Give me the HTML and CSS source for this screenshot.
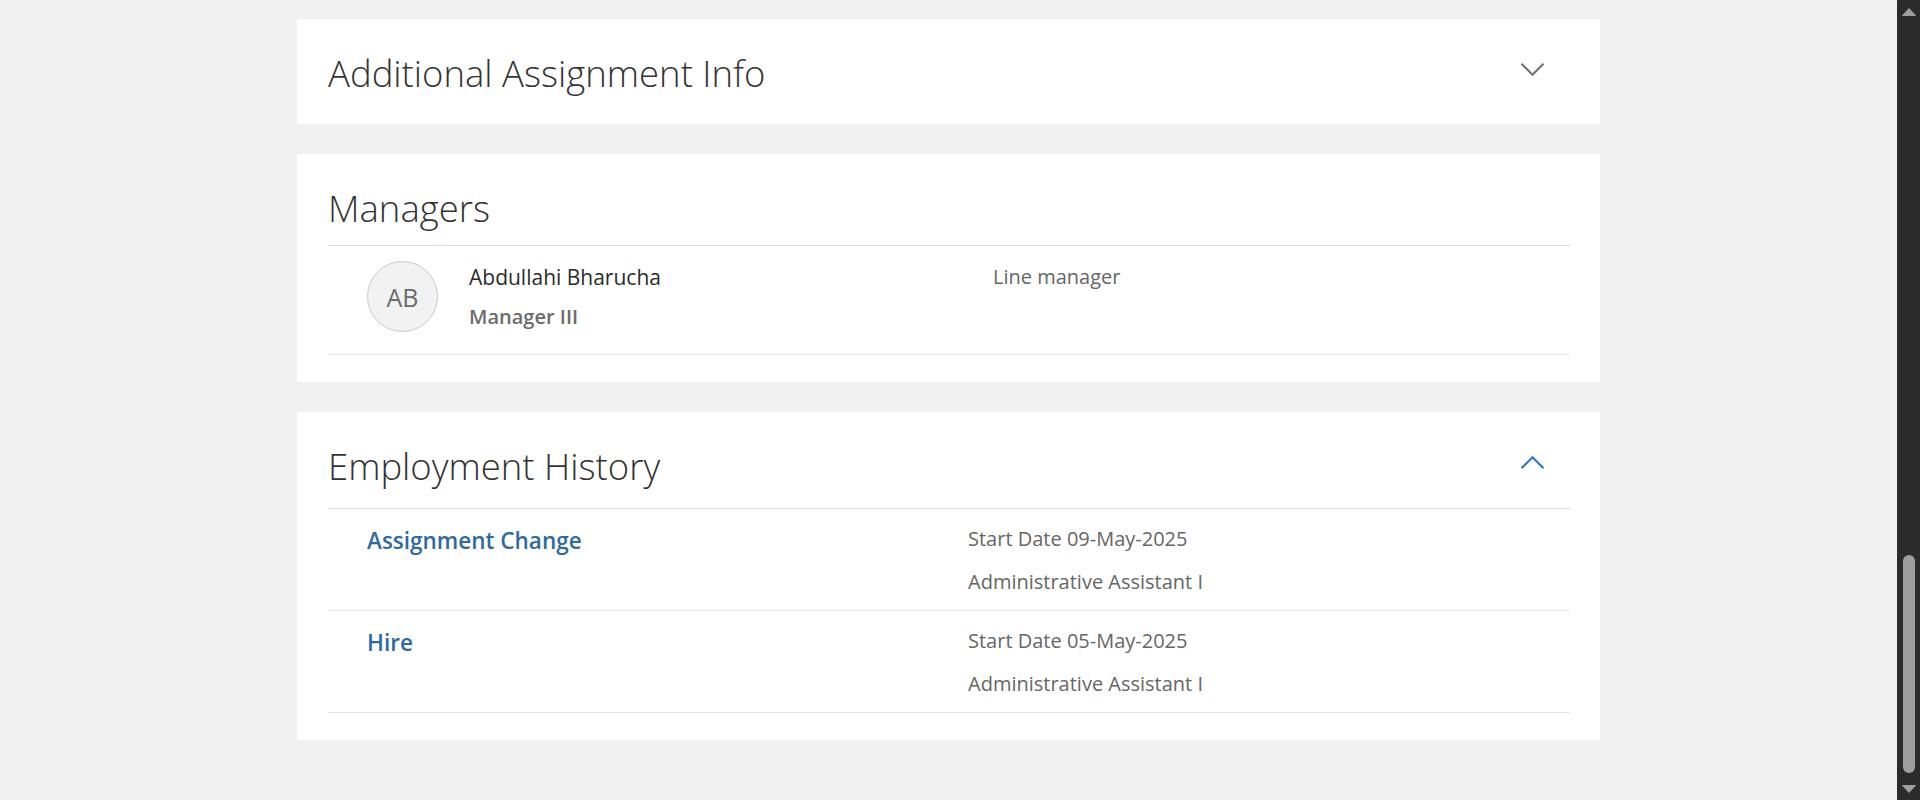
FILE: index.html
```html
<!DOCTYPE html>
<html lang="en">
<head>
<meta charset="utf-8">
<title>Assignment</title>
<link rel="stylesheet" href="styles.css">
</head>
<body>
<div class="app">
  <main class="main">
    <section class="card">
      <header class="card-header">
        <h2 class="card-title">Additional Assignment Info</h2>
        <button class="toggle" type="button" aria-label="Expand">
          <svg width="25" height="15" viewBox="0 0 25 15"><polyline points="1.5,1.8 12.5,12.8 23.5,1.8" fill="none" stroke="#737373" stroke-width="2.2"/></svg>
        </button>
      </header>
    </section>

    <section class="card">
      <header class="card-header">
        <h2 class="card-title">Managers</h2>
      </header>
      <div class="list list--managers">
        <div class="mgr-row">
          <div class="avatar">AB</div>
          <div class="mgr-info">
            <div class="mgr-name">Abdullahi Bharucha</div>
            <div class="mgr-job">Manager III</div>
          </div>
          <div class="mgr-role">Line manager</div>
        </div>
      </div>
    </section>

    <section class="card">
      <header class="card-header">
        <h2 class="card-title">Employment History</h2>
        <button class="toggle" type="button" aria-label="Collapse">
          <svg width="25" height="15" viewBox="0 0 25 15"><polyline points="1.5,13.2 12.5,2.2 23.5,13.2" fill="none" stroke="#2a7bd0" stroke-width="2.2"/></svg>
        </button>
      </header>
      <div class="list list--history">
        <div class="hist-row">
          <div class="hist-type">Assignment Change</div>
          <div class="hist-meta">
            <div class="hist-line">Start Date 09-May-2025</div>
            <div class="hist-line hist-line--second">Administrative Assistant I</div>
          </div>
        </div>
        <div class="hist-row">
          <div class="hist-type">Hire</div>
          <div class="hist-meta">
            <div class="hist-line">Start Date 05-May-2025</div>
            <div class="hist-line hist-line--second">Administrative Assistant I</div>
          </div>
        </div>
      </div>
    </section>
  </main>

  <div class="scrollbar">
    <div class="sb-btn">
      <svg width="14" height="8" viewBox="0 0 14 8"><path d="M7 0.5 L13.5 7.5 L0.5 7.5 Z" fill="#9e9e9e" stroke="#9e9e9e" stroke-linejoin="round"/></svg>
    </div>
    <div class="sb-track"><div class="sb-thumb"></div></div>
    <div class="sb-btn">
      <svg width="14" height="8" viewBox="0 0 14 8"><path d="M0.5 0.5 L13.5 0.5 L7 7.5 Z" fill="#9e9e9e" stroke="#9e9e9e" stroke-linejoin="round"/></svg>
    </div>
  </div>
</div>
</body>
</html>
```
FILE: styles.css
```css
* { box-sizing: border-box; }

html, body {
  margin: 0;
  height: 100%;
}

body {
  background: #f0f0f0;
  font-family: "Open Sans", "Noto Sans", "Liberation Sans", sans-serif;
  color: #333;
  overflow: hidden;
}

.app {
  display: flex;
  height: 800px;
}

.main {
  flex: 1;
  padding-top: 19px;
  display: flex;
  flex-direction: column;
  align-items: center;
  gap: 30px;
}

.card {
  width: 1303px;
  background: #fff;
  padding: 30px 30px 27px 31px;
}

.card-header {
  display: flex;
  justify-content: space-between;
  align-items: flex-start;
}

.card-title {
  margin: 0;
  font-size: 36.5px;
  font-weight: 300;
  line-height: 48px;
  color: #333;
}

.toggle {
  width: 40px;
  height: 40px;
  margin-right: 18px;
  padding: 0;
  border: 0;
  background: none;
  display: flex;
  align-items: center;
  justify-content: center;
}

.list {
  border-top: 1px solid #d6dfe6;
}

.list--managers { margin-top: 13px; }
.list--history { margin-top: 18px; }

.mgr-row {
  display: flex;
  align-items: flex-start;
  padding: 15px 0 22px 39px;
  border-bottom: 1px solid #e6e6e6;
}

.avatar {
  flex: none;
  width: 71px;
  height: 71px;
  border-radius: 50%;
  border: 1px solid #c9c9c9;
  background: #f2f2f2;
  display: flex;
  align-items: center;
  justify-content: center;
  font-size: 25px;
  color: #6b6b6b;
}

.mgr-info {
  width: 524px;
  margin-left: 31px;
  padding-top: 2px;
}

.mgr-name {
  font-size: 21px;
  line-height: 28px;
  color: #2b2b2b;
}

.mgr-job {
  margin-top: 12px;
  font-size: 20px;
  line-height: 28px;
  font-weight: 600;
  color: #6b6b6b;
}

.mgr-role {
  padding-top: 2px;
  font-size: 20px;
  line-height: 28px;
  color: #666;
}

.hist-row {
  display: flex;
  align-items: flex-start;
  padding: 16px 0 14px 39px;
  border-bottom: 1px solid #e6e6e6;
}

.hist-type {
  width: 601px;
  padding-top: 2px;
  font-size: 22.5px;
  line-height: 28px;
  font-weight: 600;
  color: #2f6aa1;
}

.hist-line {
  font-size: 20px;
  line-height: 28px;
  color: #666;
}

.hist-line--second { margin-top: 15px; }

.scrollbar {
  flex: none;
  width: 23px;
  height: 800px;
  background: #2b2b2b;
  display: flex;
  flex-direction: column;
  align-items: center;
}

.sb-btn {
  flex: none;
  height: 23px;
  width: 100%;
  display: flex;
  align-items: center;
  justify-content: center;
}

.sb-track {
  flex: 1;
  width: 100%;
  display: flex;
  justify-content: center;
}

.sb-thumb {
  margin-top: 532px;
  width: 12px;
  height: 218px;
  border-radius: 6px;
  background: #9e9e9e;
}
```
